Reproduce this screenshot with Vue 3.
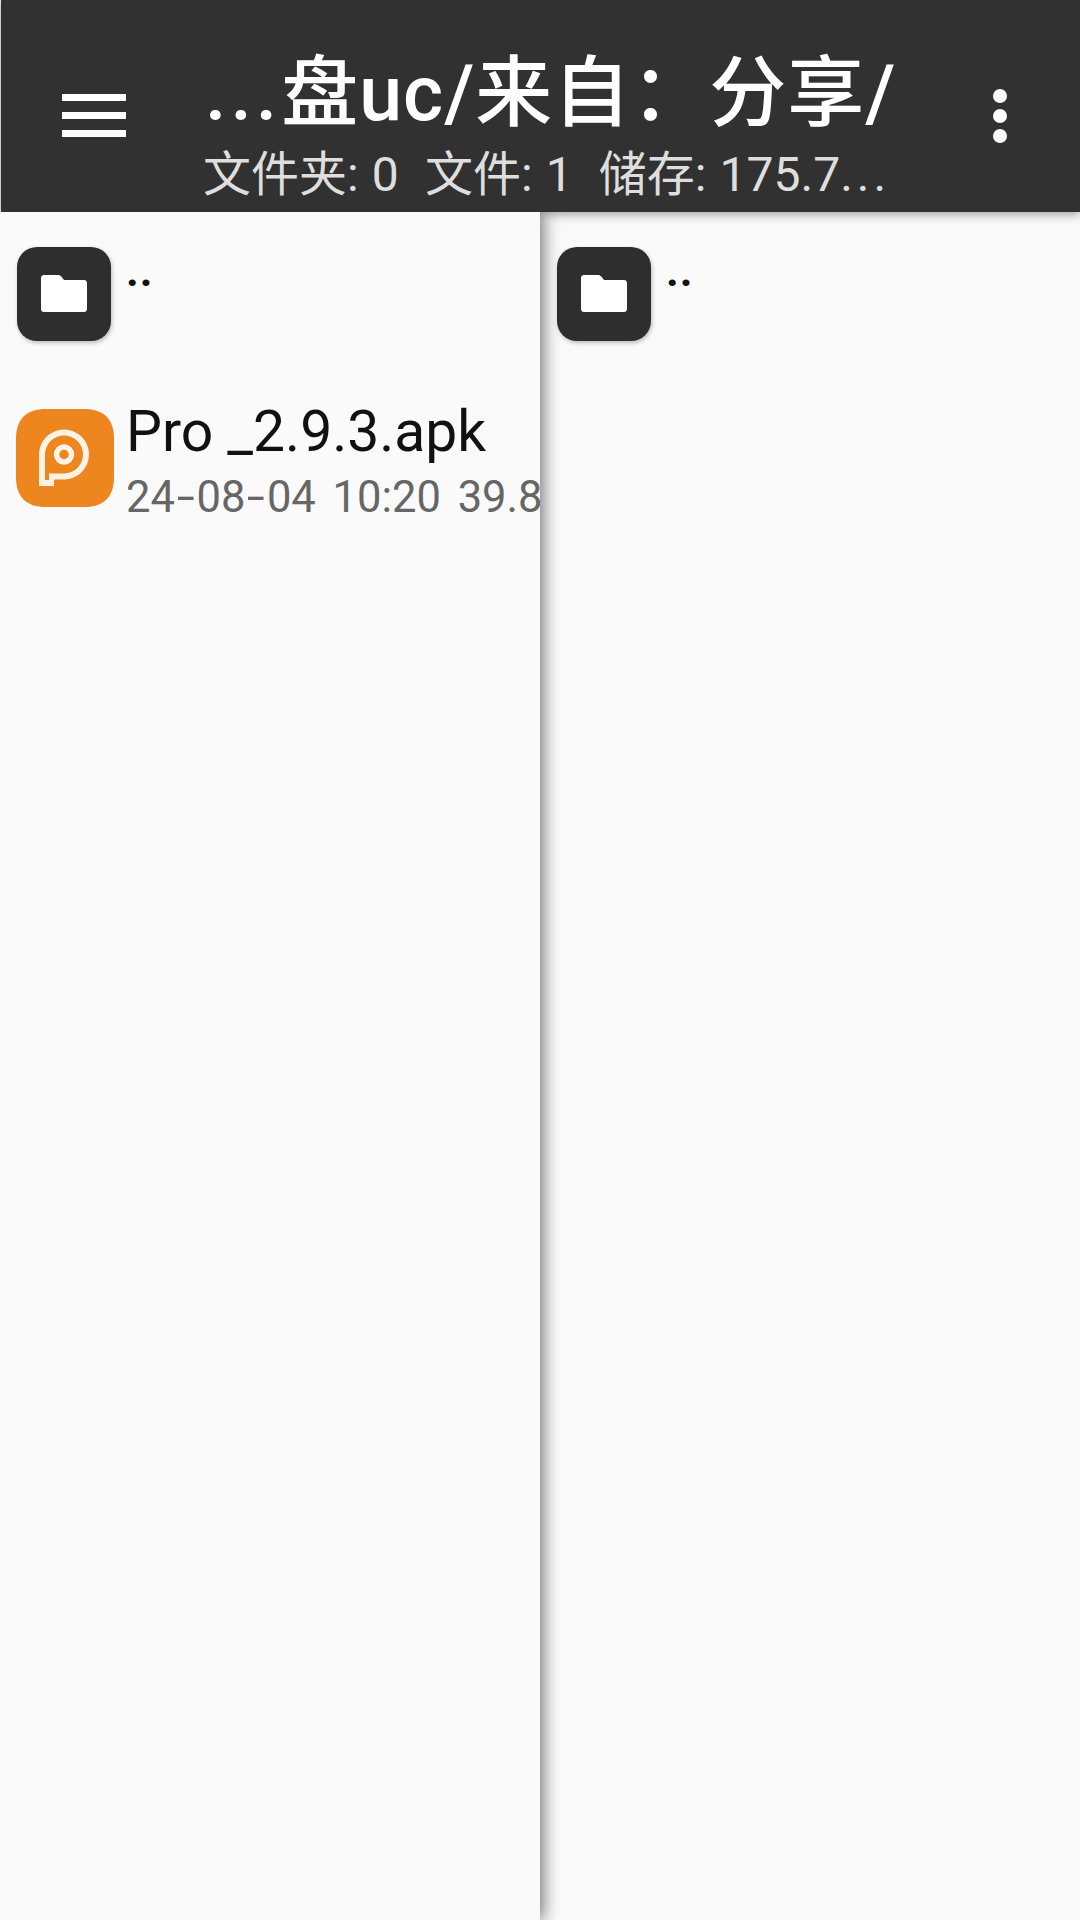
<script setup>
const panes = [
  { id: 'left', files: true },
  { id: 'right', files: false }
]
</script>

<template>
  <div class="screen">
    <header class="bar">
      <button class="menu" aria-label="menu">
        <span></span><span></span><span></span>
      </button>
      <div class="heading">
        <div class="title"><span class="dots">...</span>盘uc/来自：分享/</div>
        <div class="sub">文件夹: 0&nbsp; 文件: 1&nbsp; 储存: 175.7<span class="dots-sm">...</span></div>
      </div>
      <button class="more" aria-label="more">
        <span></span><span></span><span></span>
      </button>
    </header>
    <main class="panes">
      <section v-for="p in panes" :key="p.id" class="pane" :class="p.id">
        <div class="row folder-row">
          <div class="folder-icon">
            <svg width="46" height="37" viewBox="0 0 46 37">
              <path fill="#fff" d="M3 0H17C18.500 0 19.500 .6 20.300 1.500L23 5H43C44.700 5 46 6.300 46 8V34C46 35.700 44.700 37 43 37H3C1.300 37 0 35.700 0 34V3C0 1.300 1.300 0 3 0Z"/>
            </svg>
          </div>
          <div class="up">..</div>
        </div>
        <div v-if="p.files" class="row file-row">
          <svg class="app-icon" width="98" height="98" viewBox="0 0 98 98">
            <path fill="#ee861f" d="M30 0H68C88 0 98 10 98 30V68C98 88 88 98 68 98H30C10 98 0 88 0 68V30C0 10 10 0 30 0Z"/>
            <path fill="#fdf3e4" fill-rule="evenodd" d="M23 45.500A25 25 0 1 1 48 70.500H38V77H23ZM29 45.500V71H33V64.500H48A19 19 0 1 0 29 45.500Z"/>
            <circle cx="48" cy="45.500" r="7.500" fill="none" stroke="#fdf3e4" stroke-width="5.500"/>
          </svg>
          <div class="meta">
            <div class="name">Pro _2.9.3.apk</div>
            <div class="detail">24<span class="hy">-</span>08<span class="hy">-</span>04 10:20 39.8</div>
          </div>
        </div>
      </section>
    </main>
  </div>
</template>

<style>
html, body { margin: 0; background: #fafafa; }
</style>

<style scoped>
.screen {
  width: 1080px;
  height: 1920px;
  display: flex;
  flex-direction: column;
  overflow: hidden;
  background: #fafafa;
  font-family: Roboto, "Noto Sans CJK SC", sans-serif;
}
.bar {
  position: relative;
  z-index: 2;
  height: 212px;
  flex: none;
  margin-left: 1px;
  background: #313131;
  box-shadow: 0 2px 10px rgba(0, 0, 0, .4);
  display: flex;
  align-items: flex-start;
}
.menu, .more {
  padding: 0;
  border: 0;
  background: none;
  display: flex;
  flex-direction: column;
  flex: none;
}
.menu {
  width: 64px;
  margin: 94px 0 0 61px;
  gap: 11px;
}
.menu span {
  height: 7px;
  background: #fff;
}
.heading {
  width: 776px;
  margin-left: 79px;
  flex: none;
}
.title {
  margin-top: 48px;
  height: 92px;
  font-size: 77px;
  line-height: 92px;
  font-weight: 500;
  letter-spacing: 1px;
  color: #fff;
  white-space: nowrap;
}
.dots {
  letter-spacing: 4px;
}
.dots-sm {
  letter-spacing: 4px;
}
.sub {
  margin-top: 4px;
  margin-left: -2px;
  font-size: 48px;
  line-height: 62px;
  word-spacing: 1.200px;
  color: #dedede;
  white-space: nowrap;
}
.more {
  margin: 89px 0 0 12px;
  gap: 6px;
  align-items: center;
}
.more span {
  width: 14px;
  height: 14px;
  border-radius: 50%;
  background: #fff;
}
.panes {
  flex: 1;
  display: flex;
  min-height: 0;
}
.pane {
  padding: 35px 0 0 17px;
  overflow: hidden;
  box-sizing: border-box;
  background: #fafafa;
}
.pane.left {
  position: relative;
  z-index: 3;
  width: 540px;
  flex: none;
  padding-left: 16px;
  box-shadow: 3px 0 16px rgba(0, 0, 0, .55);
  clip-path: inset(0 -30px 0 0);
}
.pane.right {
  flex: 1;
}
.row {
  display: flex;
  align-items: flex-start;
}
.folder-row {
  height: 162px;
}
.left .folder-row {
  padding-left: 1px;
}
.folder-icon {
  width: 94px;
  height: 94px;
  flex: none;
  border-radius: 20px;
  background: #2e2e2e;
  box-shadow: 1px 2px 4px rgba(0, 0, 0, .25);
  display: flex;
  align-items: center;
  justify-content: center;
}
.folder-icon svg {
  margin-top: -2px;
}
.up {
  margin: 2px 0 0 15px;
  font-size: 44px;
  line-height: 44px;
  font-weight: 700;
  letter-spacing: 1px;
  color: #111;
}
.app-icon {
  flex: none;
}
.meta {
  margin-left: 12px;
  white-space: nowrap;
  min-width: 0;
}
.name {
  margin-top: -10px;
  font-size: 57px;
  line-height: 66px;
  color: #111;
}
.detail {
  margin-top: 7px;
  font-size: 43.500px;
  line-height: 52px;
  word-spacing: 6px;
  color: #666;
}
.hy {
  display: inline-block;
  padding: 0 4.750px;
  transform: scaleX(1.5);
}
</style>
